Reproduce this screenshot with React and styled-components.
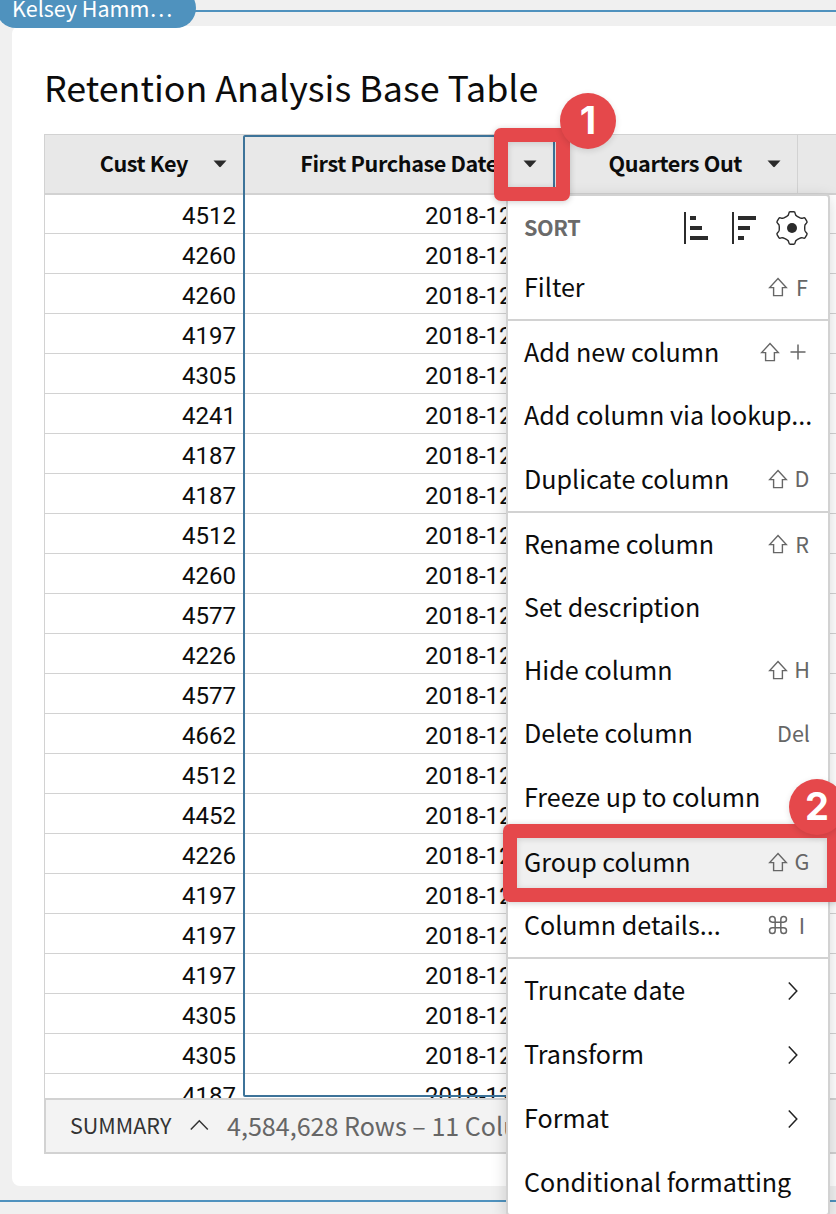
import React from "react";
import styled, { createGlobalStyle } from "styled-components";

const Global = createGlobalStyle`
  * { box-sizing: border-box; }
  html, body { margin: 0; padding: 0; }
  body {
    width: 836px;
    height: 1214px;
    overflow: hidden;
    background: #f0f0f0;
    color: #0c0c0c;
    font-family: "Noto Sans CJK SC", "Open Sans", sans-serif;
  }
`;

const Page = styled.div`
  position: relative;
  width: 836px;
  height: 1214px;
  overflow: hidden;
  padding: 10px 0 0;
`;

const Frame = styled.div`
  height: 1192px;
  border: solid #4f92be;
  border-width: 2px 0;
  padding: 14px 0 0 12px;
`;

const UserTag = styled.div`
  position: absolute;
  left: -4px;
  top: -12px;
  width: 200px;
  height: 40px;
  padding-left: 16px;
  border-radius: 20px;
  background: #4f92be;
  color: #fff;
  font-size: 21.5px;
  line-height: 39px;
  white-space: nowrap;
`;

const Panel = styled.main`
  height: 1160px;
  padding: 28px 0 0 32px;
  border-radius: 8px 0 0 8px;
  background: #fff;
`;

const Title = styled.h1`
  margin: 0;
  height: 80px;
  font-size: 35.8px;
  font-weight: 400;
  line-height: 65px;
  white-space: nowrap;
`;

const Table = styled.div`
  position: relative;
  isolation: isolate;
  height: 964px;
  overflow: hidden;
  border: solid #d2d2d2;
  border-width: 1px 0 0 1px;
`;

const Row = styled.div`
  display: grid;
  grid-template-columns: 199px 311px 243px 1fr;
  height: 40px;
  border-bottom: 1px solid #d2d2d2;
`;

const HeaderRow = styled(Row)`
  position: relative;
  z-index: 1;
  height: 60px;
  border-bottom: 2px solid #d2d2d2;
  background: #e8e8e8;
`;

const Body = styled.div`
  margin-top: -1px;
`;

const HeaderCell = styled.div`
  display: flex;
  align-items: center;
  justify-content: flex-end;
  gap: 25px;
  padding: 0 ${(p) => p.$end}px 2px 0;
  border-right: ${(p) => (p.$rule ? "1px solid #d2d2d2" : "0")};
  font-size: 21.6px;
  font-weight: 600;
  letter-spacing: -0.38px;
  line-height: 56px;
  white-space: nowrap;
`;

const Cell = styled.div`
  padding: 2px ${(p) => p.$end}px 0 0;
  font-family: Roboto, sans-serif;
  font-size: 24px;
  line-height: 40px;
  text-align: right;
  white-space: nowrap;
`;

const ColumnOutline = styled.div`
  position: absolute;
  z-index: 2;
  left: 198px;
  top: 0;
  width: 312px;
  height: 962px;
  border: 2px solid #3d7399;
  border-radius: 2px;
`;

const Summary = styled.footer`
  display: flex;
  align-items: center;
  height: 56px;
  padding: 0 0 2px 24px;
  border: 2px solid #d2d2d2;
  border-right: 0;
  background: #f3f3f3;
  white-space: nowrap;
`;

const SummaryLabel = styled.span`
  width: 119.5px;
  margin-bottom: 2px;
  font-size: 21.5px;
  color: #333;
`;

const SummaryCount = styled.span`
  margin-left: 18.5px;
  font-size: 25.1px;
  color: #666;
`;

const Menu = styled.div`
  position: absolute;
  left: 506px;
  top: 194px;
  width: 324px;
  height: 1022px;
  overflow: hidden;
  border: 2px solid #d2d2d2;
  border-radius: 4px;
  background: #fff;
  box-shadow: 0 4px 16px rgba(0, 0, 0, 0.16);
`;

const Group = styled.div`
  border-bottom: ${(p) => (p.$last ? "0" : "2px solid #d2d2d2")};
`;

const Item = styled.div`
  display: flex;
  align-items: center;
  justify-content: space-between;
  height: ${(p) => p.$h}px;
  padding: 0 18px 4px 16px;
  background: ${(p) => (p.$active ? "#f0f0f0" : "transparent")};
  font-size: 25.1px;
  white-space: nowrap;
`;

const SortItem = styled(Item)`
  padding: 2px 19px 0 16px;
`;

const SortLabel = styled.span`
  margin-bottom: 2px;
  font-size: 21.6px;
  font-weight: 600;
  letter-spacing: -0.4px;
  color: #6a6a6a;
`;

const SortTools = styled.div`
  display: flex;
  align-items: center;
`;

const SortGlyph = styled.svg`
  width: 28px;
  height: 34px;
  margin-right: ${(p) => p.$gap}px;
`;

const Shortcut = styled.span`
  display: flex;
  align-items: center;
  gap: 6px;
  color: #666;
  font-size: 21.6px;

  svg { margin-top: 2px; }
`;

const Key = styled.span`
  min-width: ${(p) => (p.$wide ? 24 : 16)}px;
  text-align: center;
`;

const KeyPlus = styled(Key)`
  display: flex;
  justify-content: center;
`;

const SubmenuArrow = styled.svg`
  width: 20px;
  height: 20px;
  margin: 4px 3px 0 0;
`;

const CaretGlyph = styled.svg`
  width: 14px;
  height: 8px;
  margin-top: 2px;
`;

const Highlight = styled.div`
  position: absolute;
  left: ${(p) => p.$x}px;
  top: ${(p) => p.$y}px;
  width: ${(p) => p.$w}px;
  height: ${(p) => p.$h}px;
  border: 14px solid #e5484b;
  border-radius: 7px;
  box-shadow: 0 1px 6px rgba(0, 0, 0, 0.2), inset 0 1px 6px rgba(0, 0, 0, 0.14);
`;

const Badge = styled.div`
  position: absolute;
  left: ${(p) => p.$x}px;
  top: ${(p) => p.$y}px;
  width: 56px;
  height: 56px;
  border-radius: 50%;
  background: #e5484b;
  box-shadow: 0 2px 6px rgba(0, 0, 0, 0.12);
  color: #fff;
  font: 700 38px/54px Inter, sans-serif;
  text-align: center;
`;

const Caret = () => (
  <CaretGlyph viewBox="0 0 14 8">
    <path d="M0.5 0.5h13L7.8 6.8q-.8.8-1.6 0z" fill="#2b2b2b" />
  </CaretGlyph>
);

const ShiftIcon = () => (
  <svg width="20" height="20" viewBox="0 0 20 20" fill="none" stroke="#666" strokeWidth="1.4">
    <path d="M10 1.5L18.3 10.6H14.4V18.6H5.6V10.6H1.7Z" />
  </svg>
);

const CommandIcon = () => (
  <svg width="20" height="20" viewBox="1.4 1.4 21.2 21.2" fill="none" stroke="#666" strokeWidth="1.6">
    <path d="M15 6v12a3 3 0 1 0 3-3H6a3 3 0 1 0 3 3V6a3 3 0 1 0-3 3h12a3 3 0 1 0-3-3" />
  </svg>
);

const PlusIcon = () => (
  <svg width="16" height="16" viewBox="0 0 16 16" stroke="#666" strokeWidth="1.5">
    <path d="M8 .5v15M.5 8h15" />
  </svg>
);

const ChevronRight = () => (
  <SubmenuArrow viewBox="0 0 20 20" fill="none" stroke="#222" strokeWidth="1.5">
    <path d="M1.8 1.5L9.8 10L1.8 18.5" />
  </SubmenuArrow>
);

const ChevronUp = () => (
  <svg width="19" height="12" viewBox="0 0 19 12" fill="none" stroke="#333" strokeWidth="1.5">
    <path d="M.8 10.5L9.3 1.8L17.8 10.5" />
  </svg>
);

const SortIcon = ({ widths, gap }) => (
  <SortGlyph $gap={gap} viewBox="0 0 28 34" fill="#2b2b2b">
    <rect x="0" y="1" width="2" height="32" />
    {widths.map((w, i) => (
      <rect key={i} x="6" y={5 + i * 10} width={w} height="4" />
    ))}
  </SortGlyph>
);

// Six rounded teeth, one every 60 degrees, joined by straight valleys.
const gearPath = Array.from({ length: 6 }, (_, i) => {
  const a = (i * Math.PI) / 3;
  const at = (u, r) =>
    `${(17 + u * Math.cos(a) + r * Math.sin(a)).toFixed(2)} ${(17 + u * Math.sin(a) - r * Math.cos(a)).toFixed(2)}`;
  return `${i ? "L" : "M"}${at(-5.2, 11.7)}Q${at(-3.4, 12.6)} ${at(-3.2, 14.4)}Q${at(-3, 16.2)} ${at(-1.8, 16.2)}L${at(1.8, 16.2)}Q${at(3, 16.2)} ${at(3.2, 14.4)}Q${at(3.4, 12.6)} ${at(5.2, 11.7)}`;
}).join("");

const GearIcon = () => (
  <svg width="34" height="34" viewBox="0 0 34 34">
    <path d={`${gearPath}Z`} fill="none" stroke="#2b2b2b" strokeWidth="1.4" strokeLinejoin="round" />
    <circle cx="17" cy="17" r="5" fill="#2b2b2b" />
  </svg>
);

const custKeys = [
  4512, 4260, 4260, 4197, 4305, 4241, 4187, 4187, 4512, 4260, 4577, 4226,
  4577, 4662, 4512, 4452, 4226, 4197, 4197, 4197, 4305, 4305, 4187,
];

const MenuItem = ({ label, keys, mod = "shift", sub, ...rest }) => (
  <Item {...rest}>
    <span>{label}</span>
    {keys && (
      <Shortcut>
        {mod === "shift" && <ShiftIcon />}
        {mod === "cmd" && <CommandIcon />}
        {keys === "+" ? <KeyPlus $wide><PlusIcon /></KeyPlus> : <Key>{keys}</Key>}
      </Shortcut>
    )}
    {sub && <ChevronRight />}
  </Item>
);

export default function App() {
  return (
    <Page>
      <Global />
      <Frame>
        <Panel>
          <Title>Retention Analysis Base Table</Title>
          <Table>
            <HeaderRow>
              <HeaderCell $end={17}>Cust Key<Caret /></HeaderCell>
              <HeaderCell $end={18}>First Purchase Date<Caret /></HeaderCell>
              <HeaderCell $end={16} $rule>Quarters Out<Caret /></HeaderCell>
            </HeaderRow>
            <Body>
              {custKeys.map((k, i) => (
                <Row key={i}>
                  <Cell $end={8}>{k}</Cell>
                  <Cell $end={42.5}>2018-12</Cell>
                </Row>
              ))}
            </Body>
            <ColumnOutline />
          </Table>
          <Summary>
            <SummaryLabel>SUMMARY</SummaryLabel>
            <ChevronUp />
            <SummaryCount>4,584,628 Rows – 11 Columns</SummaryCount>
          </Summary>
        </Panel>
      </Frame>
      <UserTag>Kelsey Hamm…</UserTag>

      <Menu>
        <Group>
          <SortItem $h={61}>
            <SortLabel>SORT</SortLabel>
            <SortTools>
              <SortIcon widths={[6, 12, 18]} gap={20} />
              <SortIcon widths={[18, 12, 6]} gap={15} />
              <GearIcon />
            </SortTools>
          </SortItem>
          <MenuItem $h={62} label="Filter" keys="F" />
        </Group>
        <Group>
          <MenuItem $h={63} label="Add new column" keys="+" />
          <MenuItem $h={64} label="Add column via lookup..." />
          <MenuItem $h={63} label="Duplicate column" keys="D" />
        </Group>
        <Group>
          <MenuItem $h={64} label="Rename column" keys="R" />
          <MenuItem $h={62} label="Set description" />
          <MenuItem $h={63} label="Hide column" keys="H" />
          <MenuItem $h={64} label="Delete column" keys="Del" mod="none" />
          <MenuItem $h={64} label="Freeze up to column" />
          <MenuItem $h={65} label="Group column" keys="G" $active />
          <MenuItem $h={62} label="Column details..." keys="I" mod="cmd" />
        </Group>
        <Group $last>
          <MenuItem $h={64} label="Truncate date" sub />
          <MenuItem $h={64} label="Transform" sub />
          <MenuItem $h={64} label="Format" sub />
          <MenuItem $h={64} label="Conditional formatting" />
        </Group>
      </Menu>

      <Highlight $x={494} $y={128} $w={76} $h={73} />
      <Badge $x={560} $y={93}>1</Badge>
      <Highlight $x={503} $y={824} $w={338} $h={78} />
      <Badge $x={789} $y={779}>2</Badge>
    </Page>
  );
}
